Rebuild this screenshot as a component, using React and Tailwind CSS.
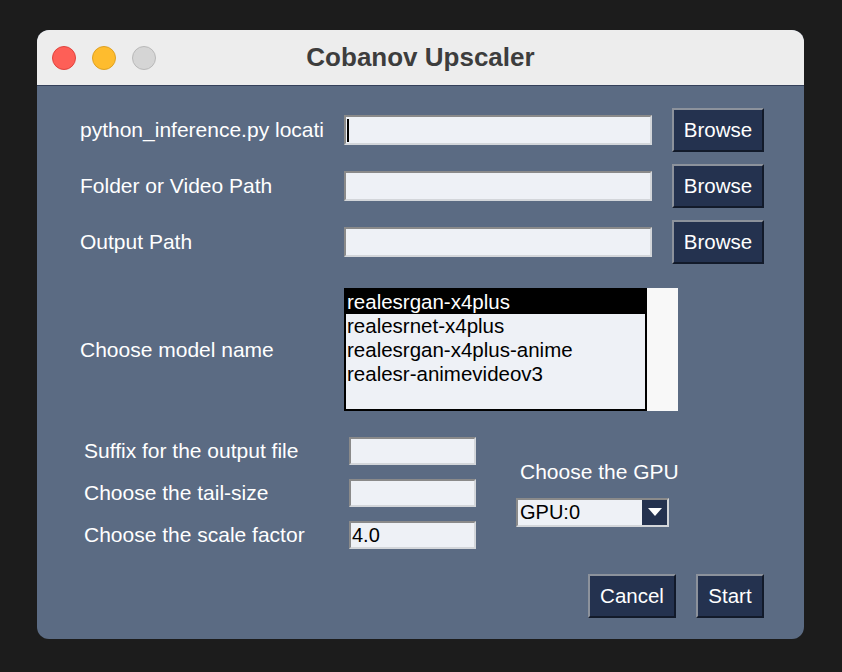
import React from "react";

const font = { fontFamily: '"Liberation Sans", Arial, sans-serif' };

function Entry({ className = "", children }) {
  return (
    <div
      className={`flex items-center border-2 border-t-[#8a8a8a] border-l-[#8a8a8a] border-b-[#d3d6da] border-r-[#d3d6da] bg-[#eef1f6] text-black ${className}`}
    >
      {children}
    </div>
  );
}

function TkButton({ label, className = "" }) {
  return (
    <button
      className={`flex items-center justify-center border-2 border-t-[#8c929c] border-l-[#8c929c] border-b-[#121a2a] border-r-[#121a2a] bg-[#24324f] text-[20.5px] text-white ${className}`}
    >
      {label}
    </button>
  );
}

const models = [
  "realesrgan-x4plus",
  "realesrnet-x4plus",
  "realesrgan-x4plus-anime",
  "realesr-animevideov3",
];

export default function App() {
  const pathRows = ["python_inference.py location", "Folder or Video Path", "Output Path"];

  return (
    <div className="h-[672px] w-[842px] overflow-hidden bg-[#1c1c1c] pt-[30px] pl-[37px]" style={font}>
      <div className="flex h-[609px] w-[767px] flex-col overflow-hidden rounded-[12px] bg-[#5b6b83]">
        {/* title bar */}
        <div className="relative flex h-[56px] shrink-0 items-center border-b border-[#34405a] bg-[#ededed]">
          <div className="flex items-center gap-[16px] pl-[15px]">
            <span className="h-[24px] w-[24px] rounded-full border border-[#e0443e] bg-[#fe5f57]" />
            <span className="h-[24px] w-[24px] rounded-full border border-[#dea123] bg-[#febc2e]" />
            <span className="h-[24px] w-[24px] rounded-full border border-[#b9b9b9] bg-[#d5d5d5]" />
          </div>
          <div className="absolute inset-0 flex items-center justify-center text-[26px] font-bold text-[#3d3d3d]">
            Cobanov Upscaler
          </div>
        </div>

        {/* body */}
        <div className="flex flex-col pt-[22px] pl-[43px] text-[21px] text-white">
          <div className="flex flex-col gap-[12px]">
            {pathRows.map((label, i) => (
              <div key={label} className="flex h-[44px] items-center">
                <div className="w-[244px] overflow-hidden whitespace-nowrap">{label}</div>
                <Entry className="ml-[20px] h-[30px] w-[308px]">
                  {i === 0 && <span className="ml-[1px] h-[23px] w-[2px] bg-black" />}
                </Entry>
                <TkButton label="Browse" className="ml-[20px] h-[44px] w-[92px]" />
              </div>
            ))}
          </div>

          <div className="mt-[24px] flex items-center">
            <div className="w-[264px]">Choose model name</div>
            <div className="flex h-[123px]">
              <div className="flex w-[303px] flex-col border-2 border-black bg-[#eef1f6] text-[20.5px] leading-[24px] text-black">
                {models.map((m, i) => (
                  <div key={m} className={`pl-[1px] ${i === 0 ? "bg-black text-white" : ""}`}>
                    {m}
                  </div>
                ))}
              </div>
              <div className="w-[31px] bg-[#f8f8f8]" />
            </div>
          </div>

          <div className="mt-[26px] flex items-center">
            <div className="flex flex-col gap-[14px] pl-[4px]">
              {[
                ["Suffix for the output file", ""],
                ["Choose the tail-size", ""],
                ["Choose the scale factor", "4.0"],
              ].map(([label, val]) => (
                <div key={label} className="flex h-[28px] items-center">
                  <div className="w-[265px] whitespace-nowrap">{label}</div>
                  <Entry className="h-[28px] w-[127px] pl-[1px] text-[20px]">{val}</Entry>
                </div>
              ))}
            </div>
            <div className="ml-[40px] flex flex-col">
              <div className="pl-[4px] leading-[24px]">Choose the GPU</div>
              <Entry className="mt-[14px] h-[29px] w-[153px] justify-between text-[20px]">
                <span className="pl-[2px]">GPU:0</span>
                <span className="flex h-[25px] w-[25px] items-center justify-center bg-[#24324f]">
                  <svg width="14" height="8" viewBox="0 0 14 8">
                    <polygon points="0,0 14,0 7,8" fill="#ffffff" />
                  </svg>
                </span>
              </Entry>
            </div>
          </div>

          <div className="mt-[25px] flex justify-end gap-[20px] pr-[40px]">
            <TkButton label="Cancel" className="h-[44px] w-[88px]" />
            <TkButton label="Start" className="h-[44px] w-[68px]" />
          </div>
        </div>
      </div>
    </div>
  );
}
